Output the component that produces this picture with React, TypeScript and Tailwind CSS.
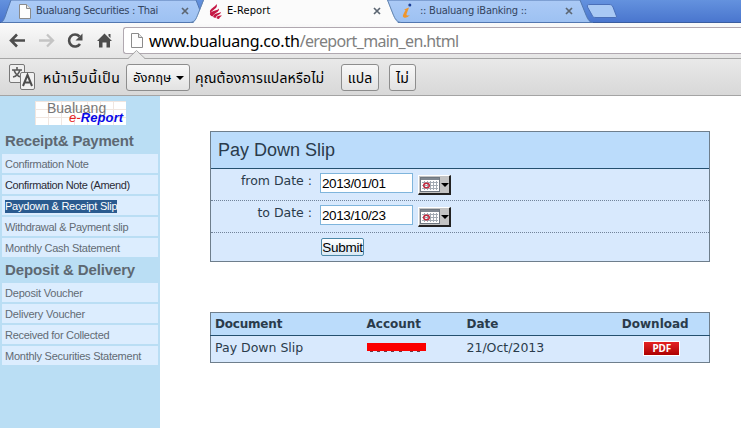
import { clsx } from 'clsx'

const RECEIPT_ITEMS = [
  { label: 'Confirmation Note',         state: 'normal',   tracking: 'tracking-[-0.3px]' },
  { label: 'Confirmation Note (Amend)', state: 'visited',  tracking: 'tracking-[-0.36px]' },
  { label: 'Paydown & Receipt Slip',    state: 'selected', tracking: 'tracking-[-0.23px]' },
  { label: 'Withdrawal & Payment slip', state: 'normal',   tracking: 'tracking-[-0.3px]' },
  { label: 'Monthly Cash Statement',    state: 'normal',   tracking: 'tracking-[-0.26px]' },
]

const DEPOSIT_ITEMS = [
  { label: 'Deposit Voucher',              state: 'normal', tracking: 'tracking-[-0.2px]' },
  { label: 'Delivery Voucher',             state: 'normal', tracking: 'tracking-[-0.2px]' },
  { label: 'Received for Collected',       state: 'normal', tracking: 'tracking-[-0.29px]' },
  { label: 'Monthly Securities Statement', state: 'normal', tracking: 'tracking-[-0.25px]' },
]

type Item = { label: string; state: string; tracking: string }

function PageIcon({ className }: { className?: string }) {
  return (
    <svg width="12" height="15" viewBox="0 0 12 15" className={className}>
      <path d="M.5.5h7l4 4v10H.5z" fill="#fdfdfd" stroke="#8b8b8b" />
      <path d="M7.500.5v4h4" fill="#e4e4e4" stroke="#8b8b8b" />
    </svg>
  )
}

function CloseIcon({ className }: { className?: string }) {
  return (
    <svg width="8" height="8" viewBox="0 0 8 8" className={className}>
      <path d="M1 1l6 6M7 1L1 7" stroke="#5c6672" strokeWidth="1.7" />
    </svg>
  )
}

function TabShapes() {
  return (
    <svg width="741" height="24" viewBox="0 0 741 24" className="absolute left-0 top-0">
      <defs>
        <linearGradient id="tab" x1="0" y1="0" x2="0" y2="1">
          <stop offset="0" stopColor="#abcaf6" />
          <stop offset="1" stopColor="#9dc1f2" />
        </linearGradient>
      </defs>
      <path d="M1 22.5C4 21 5 17 7 11L11 0H196L201 13C203 19 205 22 208 22.5z" fill="url(#tab)" stroke="#5277b0" />
      <path d="M382 0H580L586 15C588 20 590 22.5 593 22.5H396C392 22 390 18 388 13z" fill="url(#tab)" stroke="#5277b0" />
      <path d="M190 24C195 23 196 20 198 15L204 0H387L393 15C395 20 397 23 401 24z" fill="#fbfbfb" />
      <path d="M190 22.5C195 22 196 19 198 14L203.500 0M387.500 0L393 14C395 19 397 22 401 22.500" fill="none" stroke="#6585ad" />
      <path d="M590 4.500H609C611 4.500 612 5 613 7L616 15C617 17 616.500 17.500 615 17.500H596C594 17.500 592.500 17 592 15L587.500 7C587 5 587.500 4.500 590 4.500z" fill="#a9c9f4" stroke="#4a6fb8" />
    </svg>
  )
}

function TabStrip() {
  return (
    <div className="relative h-[23px] bg-gradient-to-b from-[#6492de] to-[#4a76ce] border-b border-[#3a5d9f]">
      <TabShapes />
      <div className="relative flex h-[22px] items-center font-['DejaVu_Sans_Condensed'] text-[11px] text-[#33445e]">
        <div className="flex w-[209px] items-center pl-[19px]">
          <PageIcon className="mr-[5px]" />
          <span className="w-[145px] whitespace-nowrap pt-px tracking-[-0.29px]">Bualuang Securities : Thai</span>
          <CloseIcon />
        </div>
        <div className="flex w-[193px] items-center text-black">
          <svg width="13" height="15" viewBox="0 0 13 15" className="mr-[5px]">
            <path d="M7.500 0C9.500 5 3.500 5 1.500 9.500C-1 5 5.500 4 7.500 0z" fill="#c51845" />
            <path d="M10 4.500C10.500 8.500 5.500 8.500 3.500 12.500C-.5 11 .5 8.500 4 7.200C7 6 9 6 10 4.500z" fill="#c51845" />
            <path d="M12 8C11.500 11 8 10.500 6.500 14C4 13.800 3.500 12.500 5 10.800C7 8.800 10 9.300 12 8z" fill="#c51845" />
            <path d="M13 11.500C11.800 12.500 10.800 13 10 15C7.500 14.700 7 14 8 12.800C9 11.200 11 11.800 13 11.500z" fill="#c51845" />
          </svg>
          <span className="w-[146px] whitespace-nowrap pt-px tracking-[0.1px]">E-Report</span>
          <CloseIcon />
        </div>
        <div className="flex items-center">
          <svg width="10" height="16" viewBox="0 0 10 16" className="mr-[8px]">
            <circle cx="7.800" cy="2" r="1.500" fill="#1d3f96" />
            <path d="M2 6.500L7 4.500L4.500 11Q4 13.500 8 12Q5 15.500 2 14.500Q0 13.500 1.500 11L3.500 7z" fill="#ef962d" />
          </svg>
          <span className="w-[145px] whitespace-nowrap pt-px tracking-[-0.24px]">:: Bualuang iBanking ::</span>
          <CloseIcon />
        </div>
      </div>
    </div>
  )
}

function Toolbar() {
  return (
    <div className="flex h-[36px] bg-gradient-to-b from-[#fafafa] to-[#e5e5e5] border-b border-[#a6a6a6]">
      <svg width="123" height="35" viewBox="0 0 123 35" fill="none" className="shrink-0">
        <path d="M25 17.500H11M17 11.500l-6 6 6 6" stroke="#4d4d4d" strokeWidth="2.600" />
        <path d="M39 17.500h14M47 11.500l6 6-6 6" stroke="#c4c4c4" strokeWidth="2.300" />
        <path d="M80 21a6 6 0 1 1-.5-7.500" stroke="#4d4d4d" strokeWidth="2.600" />
        <path d="M82.500 10.500v7h-7z" fill="#4d4d4d" />
        <path d="M97 18l7.500-7.500L112 18h-2v6.500h-3.500v-5h-4v5H99V18zM108.500 11h2v4l-2-2z" fill="#4d4d4d" />
      </svg>
      <div className="mt-[4px] flex h-[27px] flex-1 items-center rounded-l-[3px] border border-r-0 border-[#b0a8b0] bg-white pl-[7px] font-['Noto_Sans'] text-[16px]">
        <PageIcon className="mr-[6px]" />
        <span className="whitespace-nowrap text-black tracking-[-0.21px]">
          www.bualuang.co.th<span className="text-[#808080] tracking-[-0.64px]">/ereport_main_en.html</span>
        </span>
      </div>
    </div>
  )
}

function TranslateBar() {
  return (
    <div className="relative flex h-[37px] items-center bg-gradient-to-b from-[#e9e9e9] to-[#d8d8d8] border-b border-[#a4a4a4] pl-[9px] font-['Tahoma','Noto_Sans_Thai','Noto_Sans',sans-serif] text-[14px] whitespace-nowrap text-black">
      <svg width="18" height="9" viewBox="0 0 18 9" className="absolute left-[128px] -top-[9px]">
        <path d="M0 9l8.500-8 8.500 8z" fill="#e9e9e9" />
        <path d="M0 8.500L8.500.5l8.500 8" fill="none" stroke="#a6a6a6" />
      </svg>
      <svg width="27" height="27" viewBox="0 0 27 27" className="mr-[7px] shrink-0">
        <rect x=".5" y=".5" width="15" height="18" rx="1.500" fill="#efefef" stroke="#777" />
        <path d="M3 6h10M8 3v3M5 6q2 6 7 7M11 6q-2 6-7 7" fill="none" stroke="#5a5a5a" strokeWidth="1.600" />
        <rect x="11.500" y="8.500" width="14" height="17" rx="1.500" fill="#f1f1f1" stroke="#777" />
        <path d="M14 22l4.500-11L23 22M15.500 18.500h6" fill="none" stroke="#4d4d4d" strokeWidth="2" />
      </svg>
      <span className="w-[83px] pt-[3px] tracking-[0.6px]">หน้าเว็บนี้เป็น</span>
      <button className="flex h-[27px] w-[64px] items-center gap-[5px] rounded-[3px] border border-[#8d8d8d] bg-gradient-to-b from-[#f8f8f8] to-[#e2e2e2] pl-[6px]">
        <span className="w-[38px] pt-[3px] text-[13px]">อังกฤษ</span>
        <svg width="8" height="4" viewBox="0 0 8 4" className="mt-[2px]"><path d="M0 0h8L4 4z" /></svg>
      </button>
      <span className="ml-[5px] w-[146px] pt-[3px] tracking-[0.15px]">คุณต้องการแปลหรือไม่</span>
      <button className="h-[27px] w-[38px] rounded-[3px] border border-[#8d8d8d] bg-gradient-to-b from-[#f8f8f8] to-[#e2e2e2] pt-[2px]">แปล</button>
      <button className="ml-[10px] h-[27px] w-[27px] rounded-[3px] border border-[#8d8d8d] bg-gradient-to-b from-[#f8f8f8] to-[#e2e2e2] pt-[3px] text-[14px]">ไม่</button>
    </div>
  )
}

function MenuList({ items }: { items: Item[] }) {
  return (
    <ul className="flex flex-col gap-[2px] px-[2px]">
      {items.map((item) => (
        <li key={item.label} className="flex h-[19px] items-center bg-[#dcedfe] pl-[3px] pt-[1px] text-[11px]">
          <span
            className={clsx(
              'whitespace-nowrap leading-[13px]',
              item.tracking,
              item.state === 'selected' ? 'bg-[#2a5b8f] text-white' : item.state === 'visited' ? 'text-[#2b2b36]' : 'text-[#626b74]'
            )}
          >
            {item.label}
          </span>
        </li>
      ))}
    </ul>
  )
}

function Sidebar() {
  return (
    <aside className="w-[160px] shrink-0 bg-[#badef4] font-['Liberation_Sans']">
      <div className="ml-[35px] mt-[5px] h-[24px] w-[91px] bg-white bg-[linear-gradient(to_right,#f0e6e0_1px,transparent_1px),linear-gradient(to_bottom,#f0e6e0_1px,transparent_1px)] bg-[size:13px_8px] leading-none">
        <div className="pl-[12px] text-[14px] leading-[14px] text-[#777]">Bualuang</div>
        <div className="-mt-[4px] whitespace-nowrap pl-[34px] text-[13px] font-bold italic leading-[13px] tracking-[0.1px] text-[#0909e8]">
          <span className="font-normal text-[#e62222]">e-</span>Report
        </div>
      </div>
      <h2 className="flex h-[29px] items-center pl-[5px] pt-[3px] text-[15px] font-bold tracking-[-0.2px] text-[#5d6872]">Receipt&amp; Payment</h2>
      <MenuList items={RECEIPT_ITEMS} />
      <h2 className="flex h-[26px] items-center pl-[5px] text-[15px] font-bold tracking-[-0.14px] text-[#5d6872]">Deposit &amp; Delivery</h2>
      <MenuList items={DEPOSIT_ITEMS} />
    </aside>
  )
}

function CalendarButton() {
  return (
    <button className="ml-[5px] flex h-[20px] w-[33px] items-center border border-b-2 border-r-2 border-b-[#222] border-l-white border-r-[#222] border-t-white bg-[#c3c3c3]">
      <svg width="30" height="17" viewBox="0 0 30 17" className="shrink-0">
        <rect x="1.500" y="1.500" width="19" height="14" fill="#fff" stroke="#6f7780" />
        <path d="M2 3h18" stroke="#7f8790" strokeWidth="2" />
        <path d="M3 6.500h16M3 9.500h16M3 12.500h16M5.500 5v9M8.500 5v9M11.500 5v9M14.500 5v9M17.500 5v9" stroke="#a3abb3" />
        <ellipse cx="7.500" cy="9.500" rx="2.800" ry="2.300" fill="none" stroke="#c32a3e" strokeWidth="1.500" />
        <path d="M22 7h8l-4 4z" fill="#000" />
      </svg>
    </button>
  )
}

function DateRow({ label, value }: { label: string; value: string }) {
  return (
    <div className="flex h-[32px] border-b border-dotted border-[#71839a] pt-[4px]">
      <label className="w-[101px] pt-[1px] text-right font-['DejaVu_Sans'] text-[12.5px] leading-[14px]">{label}</label>
      <input defaultValue={value} className="ml-[8px] h-[20px] w-[93px] border border-[#7fb5dc] bg-white px-[1px] pt-[2px] font-['Liberation_Sans'] text-[13.5px] tracking-[-0.4px] text-black outline-none" />
      <div className="pt-[2px]"><CalendarButton /></div>
    </div>
  )
}

export default function App() {
  return (
    <div className="flex h-[428px] w-[741px] flex-col overflow-hidden bg-white">
      <TabStrip />
      <Toolbar />
      <TranslateBar />
      <div className="flex flex-1">
        <Sidebar />
        <main className="pl-[50px] pt-[35px] text-[#2a3b4b]">
          <section className="h-[131px] w-[500px] border border-[#6e7e8c] bg-[#d8e9fd]">
            <h1 className="flex h-[37px] items-center border-b border-[#24506f] bg-[#bbdcfb] pl-[7px] font-['Liberation_Sans'] text-[18px]">Pay Down Slip</h1>
            <DateRow label="from Date :" value="2013/01/01" />
            <DateRow label="to Date :" value="2013/10/23" />
            <button className="ml-[110px] mt-[5px] block h-[18px] w-[43px] whitespace-nowrap rounded-[2px] border border-[#4d89a8] bg-gradient-to-b from-white to-[#d8e9f5] pt-px font-['Liberation_Sans'] text-[13.5px] leading-[15px] tracking-[-0.25px] text-black">Submit</button>
          </section>

          <table className="mt-[50px] h-[51px] w-[499px] table-fixed border-collapse border border-[#6e7e8c] bg-[#d8e9fd] text-left font-['DejaVu_Sans'] text-[12px]">
            <thead>
              <tr className="h-[23px] border-b border-[#24506f] bg-[#bbdcfb]">
                <th className="w-[152px] pl-[4px] tracking-[-0.2px]">Document</th>
                <th className="w-[100px] pl-[4px]">Account</th>
                <th className="w-[138px] pl-[4px]">Date</th>
                <th className="w-[109px] pl-px text-center">Download</th>
              </tr>
            </thead>
            <tbody className="text-[12.5px]">
              <tr className="h-[27px]">
                <td className="pb-[2px] pl-[4px]">Pay Down Slip</td>
                <td className="pb-[4px] pl-[4px]">
                  <svg width="60" height="9" viewBox="0 0 60 9"><path d="M0 0h59v8H0z" fill="#fb0000" /><path d="M3 8.500h24M32 8.500h6M43 8.500h12" stroke="#693c48" strokeDasharray="3 4" /></svg>
                </td>
                <td className="pb-[2px] pl-[4px]">21/Oct/2013</td>
                <td className="pb-[2px] pl-[14px]">
                  <div className="mx-auto flex h-[15px] w-[37px] items-center justify-center border border-white bg-gradient-to-b from-[#e52222] to-[#ad0000] font-['Noto_Sans'] text-[10px] font-bold leading-none tracking-[-0.2px] text-white">PDF</div>
                </td>
              </tr>
            </tbody>
          </table>
        </main>
      </div>
    </div>
  )
}
